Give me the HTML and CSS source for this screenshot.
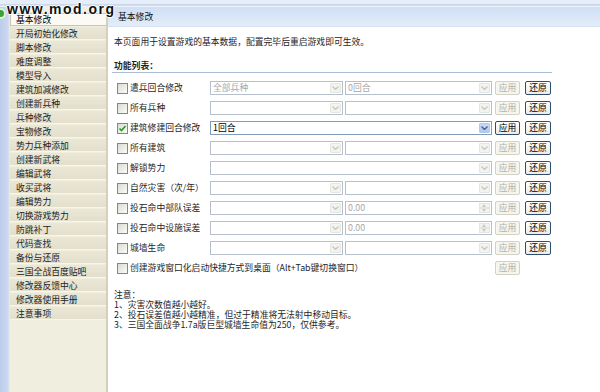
FILE: index.html
```html
<!DOCTYPE html>
<html lang="zh-Hans">
<head>
    <meta charset="UTF-8">
    <title>基本修改</title>
    <link rel="stylesheet" href="styles.css">
</head>
<body>

    <div class="window">
        <div class="topband"></div>
        <div class="frame">
            <div class="edge"></div>

            <ul class="nav">
                <li class="active">基本修改</li>
                <li>开局初始化修改</li>
                <li>脚本修改</li>
                <li>难度调整</li>
                <li>模型导入</li>
                <li>建筑加减修改</li>
                <li>创建新兵种</li>
                <li>兵种修改</li>
                <li>宝物修改</li>
                <li>势力兵种添加</li>
                <li>创建新武将</li>
                <li>编辑武将</li>
                <li>收买武将</li>
                <li>编辑势力</li>
                <li>切换游戏势力</li>
                <li>防跳补丁</li>
                <li>代码查找</li>
                <li>备份与还原</li>
                <li>三国全战百度贴吧</li>
                <li>修改器反馈中心</li>
                <li>修改器使用手册</li>
                <li>注意事项</li>
            </ul>

            <div class="main">
                <div class="header">基本修改</div>
                <div class="content">
                    <p class="desc">本页面用于设置游戏的基本数据，配置完毕后重启游戏即可生效。</p>
                    <h2 class="section">功能列表：</h2>

                    <div class="rows">
                        <div class="row">
                            <div class="opt"><span class="cb"></span><span class="lbl">遣兵回合修改</span></div>
                            <div class="combo w1 off"><span class="val">全部兵种</span><span class="arrow"><svg width="7" height="4" viewBox="0 0 7 4"><polyline points="0.5,0.5 3.5,3.5 6.5,0.5" /></svg></span></div>
                            <div class="combo w2 off"><span class="val">0回合</span><span class="arrow"><svg width="7" height="4" viewBox="0 0 7 4"><polyline points="0.5,0.5 3.5,3.5 6.5,0.5" /></svg></span></div>
                            <button class="btn apply" disabled>应用</button>
                            <button class="btn restore">还原</button>
                        </div>

                        <div class="row">
                            <div class="opt"><span class="cb"></span><span class="lbl">所有兵种</span></div>
                            <div class="combo w1 off"><span class="val"></span><span class="arrow"><svg width="7" height="4" viewBox="0 0 7 4"><polyline points="0.5,0.5 3.5,3.5 6.5,0.5" /></svg></span></div>
                            <div class="combo w2 off"><span class="val"></span><span class="arrow"><svg width="7" height="4" viewBox="0 0 7 4"><polyline points="0.5,0.5 3.5,3.5 6.5,0.5" /></svg></span></div>
                            <button class="btn apply" disabled>应用</button>
                            <button class="btn restore">还原</button>
                        </div>

                        <div class="row">
                            <div class="opt"><span class="cb on"><svg width="9" height="9" viewBox="0 0 9 9"><polyline points="1.5,4.5 3.5,6.5 7.5,2" /></svg></span><span class="lbl">建筑修建回合修改</span></div>
                            <div class="combo wide"><span class="val">1回合</span><span class="arrow"><svg width="7" height="4" viewBox="0 0 7 4"><polyline points="0.5,0.5 3.5,3.5 6.5,0.5" /></svg></span></div>
                            <button class="btn apply">应用</button>
                            <button class="btn restore">还原</button>
                        </div>

                        <div class="row">
                            <div class="opt"><span class="cb"></span><span class="lbl">所有建筑</span></div>
                            <div class="combo w1 off"><span class="val"></span><span class="arrow"><svg width="7" height="4" viewBox="0 0 7 4"><polyline points="0.5,0.5 3.5,3.5 6.5,0.5" /></svg></span></div>
                            <div class="combo w2 off"><span class="val"></span><span class="arrow"><svg width="7" height="4" viewBox="0 0 7 4"><polyline points="0.5,0.5 3.5,3.5 6.5,0.5" /></svg></span></div>
                            <button class="btn apply" disabled>应用</button>
                            <button class="btn restore">还原</button>
                        </div>

                        <div class="row">
                            <div class="opt"><span class="cb"></span><span class="lbl">解锁势力</span></div>
                            <div class="combo wide off"><span class="val"></span><span class="arrow"><svg width="7" height="4" viewBox="0 0 7 4"><polyline points="0.5,0.5 3.5,3.5 6.5,0.5" /></svg></span></div>
                            <button class="btn apply" disabled>应用</button>
                            <button class="btn restore">还原</button>
                        </div>

                        <div class="row">
                            <div class="opt"><span class="cb"></span><span class="lbl">自然灾害（次/年）</span></div>
                            <div class="combo w1 off"><span class="val"></span><span class="arrow"><svg width="7" height="4" viewBox="0 0 7 4"><polyline points="0.5,0.5 3.5,3.5 6.5,0.5" /></svg></span></div>
                            <div class="combo w2 off"><span class="val"></span><span class="arrow"><svg width="7" height="4" viewBox="0 0 7 4"><polyline points="0.5,0.5 3.5,3.5 6.5,0.5" /></svg></span></div>
                            <button class="btn apply" disabled>应用</button>
                            <button class="btn restore">还原</button>
                        </div>

                        <div class="row">
                            <div class="opt"><span class="cb"></span><span class="lbl">投石命中部队误差</span></div>
                            <div class="combo w1 off"><span class="val"></span><span class="arrow"><svg width="7" height="4" viewBox="0 0 7 4"><polyline points="0.5,0.5 3.5,3.5 6.5,0.5" /></svg></span></div>
                            <div class="combo w2 off"><span class="val">0.00</span><span class="spin"><i class="up"></i><i class="down"></i></span></div>
                            <button class="btn apply" disabled>应用</button>
                            <button class="btn restore">还原</button>
                        </div>

                        <div class="row">
                            <div class="opt"><span class="cb"></span><span class="lbl">投石命中设施误差</span></div>
                            <div class="combo w1 off"><span class="val"></span><span class="arrow"><svg width="7" height="4" viewBox="0 0 7 4"><polyline points="0.5,0.5 3.5,3.5 6.5,0.5" /></svg></span></div>
                            <div class="combo w2 off"><span class="val">0.00</span><span class="spin"><i class="up"></i><i class="down"></i></span></div>
                            <button class="btn apply" disabled>应用</button>
                            <button class="btn restore">还原</button>
                        </div>

                        <div class="row">
                            <div class="opt"><span class="cb"></span><span class="lbl">城墙生命</span></div>
                            <div class="combo w1 off"><span class="val"></span><span class="arrow"><svg width="7" height="4" viewBox="0 0 7 4"><polyline points="0.5,0.5 3.5,3.5 6.5,0.5" /></svg></span></div>
                            <div class="combo w2 off"><span class="val"></span><span class="arrow"><svg width="7" height="4" viewBox="0 0 7 4"><polyline points="0.5,0.5 3.5,3.5 6.5,0.5" /></svg></span></div>
                            <button class="btn apply" disabled>应用</button>
                            <button class="btn restore">还原</button>
                        </div>

                        <div class="row">
                            <div class="opt long"><span class="cb"></span><span class="lbl">创建游戏窗口化启动快捷方式到桌面（Alt+Tab键切换窗口）</span></div>
                            <button class="btn apply" disabled>应用</button>
                        </div>
                    </div>

                    <p class="notes">注意：<br>1、灾害次数值越小越好。<br>2、投石误差值越小越精准，但过于精准将无法射中移动目标。<br>3、三国全面战争1.7a版巨型城墙生命值为250，仅供参考。</p>
                </div>
            </div>
        </div>

        <span class="logo"></span>
        <div class="watermark">www.mod.org</div>
    </div>

</body>
</html>
```

FILE: styles.css
```css
* {
    box-sizing: border-box;
}

body {
    margin: 0;
    font-family: "Noto Sans CJK SC", "Noto Sans", sans-serif;
    font-size: 8.8px;
    color: #1e1e1e;
    background-color: #fff;
}

.window {
    position: relative;
    width: 600px;
    height: 392px;
    overflow: hidden;
}

.topband {
    height: 7px;
    background: linear-gradient(#e4edf9 0, #e4edf9 4px, #b3c4db 5px, #eef3fb 6px);
}

.frame {
    display: flex;
    height: 385px;
}

.edge {
    width: 10px;
    flex: none;
    background: linear-gradient(90deg, #bcccea, #cbd8ef 80%, #e9eef7);
}

/* left menu */
.nav {
    width: 98px;
    flex: none;
    margin: 0;
    padding: 6px 0 0;
    list-style: none;
    background-color: #f0eedf;
    border-right: 2px solid #d4d0bc;
}

.nav li {
    height: 13px;
    margin-bottom: 1px;
    padding-left: 6px;
    line-height: 13px;
    white-space: nowrap;
    background: linear-gradient(#ebe7d6, #e3dfcc);
    border-bottom: 1px solid #f7f5ec;
    color: #222;
}

.nav li.active {
    background: #fbfaf5;
    border: 1px solid #c9c5b2;
    border-right: none;
    padding-left: 5px;
    line-height: 11px;
    color: #000;
}

/* right panel */
.main {
    flex: 1;
    display: flex;
    flex-direction: column;
}

.header {
    height: 20px;
    padding-left: 10px;
    line-height: 20px;
    background: linear-gradient(#cfdff4, #e3edfa);
    border-bottom: 1px solid #d6e2f2;
    color: #111;
}

.content {
    padding-left: 6px;
}

.desc {
    margin: 9px 0 0;
    line-height: 12px;
}

.section {
    width: 440px;
    margin: 12px 0 0 -2px;
    padding-left: 2px;
    font-size: 8.8px;
    font-weight: bold;
    line-height: 12px;
    border-bottom: 1px solid #a9bdd6;
}

.rows {
    margin-top: 5px;
}

.row {
    display: flex;
    align-items: center;
    height: 20px;
}

.opt {
    width: 96px;
    flex: none;
    display: flex;
    align-items: center;
    white-space: nowrap;
}

.opt.long {
    width: 381px;
}

.cb {
    width: 11px;
    height: 11px;
    margin-left: 3px;
    border: 1px solid #7e8894;
    background: linear-gradient(135deg, #dcdcd4, #fbfbf8);
    display: flex;
    align-items: center;
    justify-content: center;
}

.cb svg polyline {
    fill: none;
    stroke: #21a121;
    stroke-width: 1.6;
}

.lbl {
    margin-left: 2px;
    line-height: 12px;
}

.combo {
    height: 14px;
    flex: none;
    display: flex;
    align-items: stretch;
    border: 1px solid #7f9db9;
    background-color: #fff;
    padding: 1px;
    color: #000;
}

.combo.off {
    border-color: #b6c0cc;
    color: #a8a8a8;
}

.combo.w1 {
    width: 133px;
    margin-right: 2px;
}

.combo.w2 {
    width: 147px;
    margin-right: 3px;
}

.combo.wide {
    width: 282px;
    margin-right: 3px;
}

.val {
    flex: 1;
    padding-left: 1px;
    line-height: 10px;
    white-space: nowrap;
}

.arrow {
    width: 11px;
    display: flex;
    align-items: center;
    justify-content: center;
    background: linear-gradient(#c9d9f9, #b1c8f2);
    border: 1px solid #b4c8ef;
    border-radius: 1px;
}

.arrow polyline {
    fill: none;
    stroke: #4d6185;
    stroke-width: 1.4;
}

.combo.off .arrow {
    background: #f3f3ef;
    border-color: #e6e6e0;
}

.combo.off .arrow polyline {
    stroke: #c9c9c2;
}

.spin {
    width: 11px;
    display: flex;
    flex-direction: column;
}

.spin i {
    flex: 1;
    background: #f3f3ef;
    border: 1px solid #e6e6e0;
    position: relative;
}

.spin i::after {
    content: "";
    position: absolute;
    left: 2px;
    border-left: 2.5px solid transparent;
    border-right: 2.5px solid transparent;
}

.spin .up::after {
    top: 0;
    border-bottom: 3px solid #cacac3;
}

.spin .down::after {
    top: 0;
    border-top: 3px solid #cacac3;
}

.btn {
    height: 14px;
    padding: 0;
    font-family: inherit;
    font-size: 8.8px;
    line-height: 12px;
    border: 1px solid #2f4d6e;
    border-radius: 2px;
    background: linear-gradient(#ffffff, #ecebe5);
    color: #000;
}

.btn.apply {
    width: 25px;
    margin-right: 5px;
}

.btn.restore {
    width: 26px;
}

.btn:disabled {
    border-color: #d3d0c4;
    background: #f6f5ee;
    color: #b3b0a4;
}

.notes {
    margin: 12px 0 0;
    line-height: 10px;
}

/* watermark over the corner */
.watermark {
    position: absolute;
    left: 7px;
    top: 2px;
    font-family: "Liberation Sans", Arial, sans-serif;
    font-size: 14px;
    line-height: 15px;
    font-weight: bold;
    letter-spacing: 1.5px;
    color: #111;
    text-shadow: 1px 0 #fff, -1px 0 #fff, 0 1px #fff, 0 -1px #fff;
}

.logo {
    position: absolute;
    left: -5px;
    top: 8px;
    width: 11px;
    height: 11px;
    border-radius: 50%;
    background: #3aa23a;
    border: 2px solid #dff0d8;
}
```
